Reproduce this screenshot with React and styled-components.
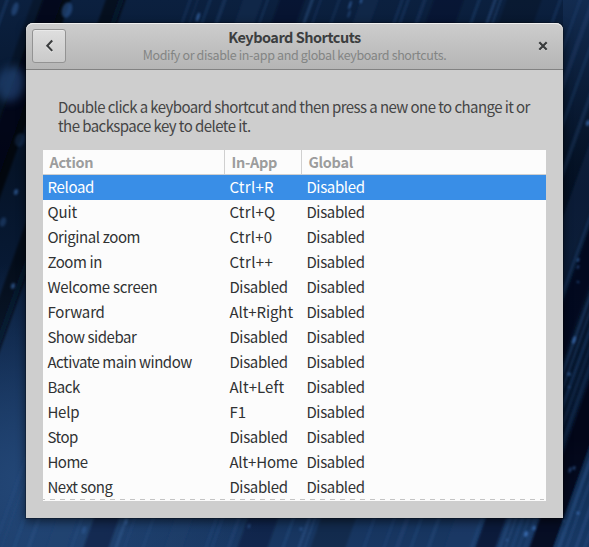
import React from 'react';
import styled, { createGlobalStyle } from 'styled-components';

const GlobalStyle = createGlobalStyle`
  *, *::before, *::after { box-sizing: border-box; }
  body {
    margin: 0;
    overflow: hidden;
    font-family: "Noto Sans CJK SC", "Noto Sans", sans-serif;
    font-size: 15px;
    color: #2e3436;
  }
`;

const Desktop = styled.div`
  display: grid;
  width: 589px;
  height: 547px;
  overflow: hidden;
  background: #0a1c38;
`;

const Wallpaper = styled.svg`
  grid-area: 1 / 1;
  display: block;
`;

const Window = styled.main`
  grid-area: 1 / 1;
  z-index: 1;
  display: flex;
  flex-direction: column;
  width: 537px;
  height: 495px;
  margin: 23px 0 0 26px;
  border-radius: 7px 7px 0 0;
  background: #cecece;
  box-shadow: 0 3px 9px 1px rgba(0, 0, 0, 0.5), 0 0 0 1px rgba(0, 0, 0, 0.23);
`;

const HeaderBar = styled.header`
  display: grid;
  grid-template-columns: 40px 1fr 40px;
  align-items: center;
  height: 47px;
  flex: none;
  border-bottom: 1px solid #828282;
  border-radius: 7px 7px 0 0;
  background: linear-gradient(#cdcdcd, #b5b5b5);
  box-shadow: inset 0 1px #efefef;
`;

const BackButton = styled.button`
  display: grid;
  place-items: center;
  width: 34px;
  height: 34px;
  margin-left: 6px;
  padding: 0;
  border: 1px solid #939393;
  border-radius: 3px;
  background: linear-gradient(#dedede, #cacaca);
  box-shadow: inset 0 1px #e9e9e9;
`;

const CloseButton = styled.button`
  display: grid;
  place-items: center;
  justify-self: center;
  width: 24px;
  height: 24px;
  padding: 0;
  border: 0;
  background: none;
`;

const Titles = styled.div`
  display: flex;
  flex-direction: column;
  align-items: center;
  padding-bottom: 1px;
  white-space: nowrap;
`;

const Title = styled.h1`
  margin: 0;
  font-size: 14.5px;
  font-weight: 700;
  line-height: 18px;
  letter-spacing: -0.5px;
  color: #3c3e3f;
`;

const Subtitle = styled.p`
  margin: 0;
  font-size: 12.5px;
  line-height: 18px;
  letter-spacing: -0.36px;
  color: #838584;
`;

const Intro = styled.p`
  flex: none;
  margin: 27px 0 15px;
  padding-left: 32px;
  height: 38px;
  line-height: 19px;
  color: #454545;
`;

const IntroLine = styled.span`
  display: block;
  white-space: nowrap;
  letter-spacing: ${(p) => p.$tracking}px;
`;

const Table = styled.section`
  flex: none;
  margin: 0 17px;
  width: 503px;
  height: 351px;
  overflow: hidden;
  background:
    repeating-linear-gradient(90deg, #c4c4c4 0 2px, transparent 2px 7px, #c4c4c4 7px 10px) 0 349px / 501px 1px no-repeat,
    #fcfcfc;
`;

const Columns = styled.div`
  display: grid;
  grid-template-columns: 182px 77px 1fr;
`;

const TableHead = styled(Columns)`
  height: 25px;
  border-bottom: 1px solid #cfcfcf;
`;

const HeadCell = styled.div`
  padding-left: 6.5px;
  border-right: 1px solid #d0d0d0;
  font-size: 14.5px;
  font-weight: 700;
  line-height: 23px;
  letter-spacing: -0.32px;
  color: #9c9d9d;
  &:last-child { border-right: 0; }
`;

const TableRow = styled(Columns)`
  height: 25px;
  line-height: 23px;
  color: ${(p) => (p.$selected ? '#ffffff' : '#303233')};
  background: ${(p) => (p.$selected ? '#398ee7' : 'transparent')};
`;

const Cell = styled.div`
  padding-left: 4.4px;
  white-space: nowrap;
  letter-spacing: ${(p) => p.$tracking}px;
`;

const TRACKING = {
  Reload: -0.3, Quit: -0.1, 'Original zoom': -0.4, 'Zoom in': -0.4,
  'Welcome screen': -0.27, Forward: -0.17, 'Show sidebar': -0.47,
  'Activate main window': -0.47, Back: -0.45, Help: -0.2, Stop: -0.45,
  Home: -0.5, 'Next song': -0.4, 'Ctrl+R': 0.3, 'Ctrl+Q': 0.3,
  'Ctrl+0': 0.25, 'Ctrl++': 0.4, Disabled: -0.35, 'Alt+Right': -0.07,
  'Alt+Left': 0.07, 'Alt+Home': -0.15,
};

const SHORTCUTS = [
  ['Reload', 'Ctrl+R'],
  ['Quit', 'Ctrl+Q'],
  ['Original zoom', 'Ctrl+0'],
  ['Zoom in', 'Ctrl++'],
  ['Welcome screen', 'Disabled'],
  ['Forward', 'Alt+Right'],
  ['Show sidebar', 'Disabled'],
  ['Activate main window', 'Disabled'],
  ['Back', 'Alt+Left'],
  ['Help', 'F1'],
  ['Stop', 'Disabled'],
  ['Home', 'Alt+Home'],
  ['Next song', 'Disabled'],
];

// Light streaks: [x at the bottom edge, width, opacity, colour]
const STREAKS = [
  [-195, 3, 0.35, '#2a5088'], [-168, 30, 0.25, '#00040d'],
  [-158, 28, 0.65, '#000309'], [-82, 5, 0.2, '#24497c'], [-95, 20, 0.5, '#000309'],
  [-12, 3, 0.25, '#2a5088'], [-4, 2, 0.2, '#2a5088'], [8, 3, 0.25, '#315a92'],
  [22, 4, 0.25, '#315a92'], [42, 20, 0.2, '#1c3f70'], [66, 2, 0.3, '#315a92'],
  [79, 25, 0.35, '#020b1b'], [110, 3, 0.4, '#3a649c'], [119, 2, 0.3, '#2a5088'],
  [137, 3, 0.2, '#315a92'], [160, 18, 0.2, '#1c3f70'], [200, 3, 0.3, '#2a5088'],
  [206, 3, 0.3, '#2a5088'], [222, 4, 0.25, '#2a5088'], [233, 30, 0.3, '#020b1b'],
  [277, 3, 0.3, '#315a92'], [293, 3, 0.45, '#315a92'], [299, 2, 0.4, '#315a92'],
  [306, 35, 0.2, '#020b1b'], [358, 3, 0.3, '#2a5088'], [378, 3, 0.25, '#2a5088'],
  [390, 5, 0.25, '#2a5088'], [405, 3, 0.25, '#315a92'], [422, 4, 0.25, '#315a92'],
  [440, 24, 0.25, '#1c3f70'], [465, 4, 0.4, '#2a5088'], [471, 20, 0.5, '#020817'],
  [494, 3, 0.4, '#315a92'], [500, 2, 0.4, '#315a92'], [506, 3, 0.4, '#2a5088'],
  [513, 2, 0.3, '#315a92'], [519, 3, 0.3, '#2a5088'], [525, 24, 0.75, '#000612'],
  [549, 90, 0.45, '#1a3a68'], [553, 3, 0.5, '#315a92'], [561, 2, 0.4, '#315a92'],
  [570, 3, 0.3, '#3b68a5'], [579, 2, 0.4, '#315a92'], [588, 6, 0.3, '#315a92'],
  [604, 3, 0.3, '#3b68a5'], [616, 10, 0.2, '#2a5088'], [640, 3, 0.2, '#315a92'],
  [660, 18, 0.25, '#1c3f70'], [690, 4, 0.2, '#2a5088'], [715, 3, 0.2, '#2a5088'],
];

// Out-of-focus highlights: [cx, cy, rx, ry, opacity]
const GLOWS = [
  [11, 84, 14, 18, 0.55], [15, 9, 3, 7, 0.4], [67, 10, 5, 8, 0.6],
  [16, 192, 2, 3, 0.6], [13, 286, 2, 3, 0.6], [20, 140, 5, 7, 0.28],
  [3, 222, 3, 5, 0.3], [198, 17, 1.4, 4.5, 0.75], [350, 5, 1, 4.5, 0.7],
  [349, 14, 0.8, 4, 0.55], [361, 1, 1, 3, 0.8],
  [588, 123, 2, 3, 0.7], [578, 260, 1.3, 2, 0.7], [578, 267, 1, 2, 0.65],
  [578, 282, 1.4, 1, 0.6], [574, 340, 1.4, 4, 0.85], [569, 374, 2, 1.5, 0.7],
  [569, 387, 1.5, 1, 0.5], [570, 470, 1.3, 3, 0.6], [574, 468, 1.4, 2, 0.6],
  [578, 513, 1.5, 1.5, 0.9], [526, 534, 1.8, 3, 0.95], [534, 528, 1.6, 2.5, 0.85],
  [507, 540, 1.3, 1.5, 0.5], [564, 521, 1, 1.5, 0.5], [126, 522, 1.4, 3, 0.65],
  [249, 526, 1.2, 2.5, 0.55], [301, 529, 1.5, 2, 0.45], [84, 530, 2, 4, 0.3],
];

function WallpaperArt() {
  return (
    <Wallpaper width="589" height="547" viewBox="0 0 589 547" aria-hidden="true">
      <defs>
        <linearGradient id="sky" x1="0" y1="0" x2="0" y2="1">
          <stop offset="0" stopColor="#0b203f" />
          <stop offset="0.3" stopColor="#051327" />
          <stop offset="0.65" stopColor="#0a1f3f" />
          <stop offset="1" stopColor="#183762" />
        </linearGradient>
        <radialGradient id="pool" cx="0.05" cy="0.88" r="0.4">
          <stop offset="0" stopColor="#234777" />
          <stop offset="1" stopColor="#234777" stopOpacity="0" />
        </radialGradient>
        <linearGradient id="side" x1="0" y1="0" x2="0" y2="1">
          <stop offset="0" stopColor="#142e54" stopOpacity="0.8" />
          <stop offset="0.35" stopColor="#020c1c" stopOpacity="0.5" />
          <stop offset="0.8" stopColor="#020c1c" stopOpacity="0.6" />
          <stop offset="1" stopColor="#102b52" stopOpacity="0.1" />
        </linearGradient>
        <filter id="soft"><feGaussianBlur stdDeviation="1.2" /></filter>
        <filter id="glow" x="-1" y="-1" width="3" height="3"><feGaussianBlur stdDeviation="0.8" /></filter>
        <filter id="haze" x="-1" y="-1" width="3" height="3"><feGaussianBlur stdDeviation="4" /></filter>
      </defs>
      <rect width="589" height="547" fill="url(#sky)" />
      <rect width="589" height="547" fill="url(#pool)" />
      <rect x="563" width="26" height="547" fill="url(#side)" />
      <g filter="url(#soft)">
        {STREAKS.map(([x, w, o, c], i) => (
          <path key={i} d={`M${x} 560h${w}L${x + w + 205} -12h${-w}Z`} fill={c} opacity={o} />
        ))}
      </g>
      {GLOWS.map(([x, y, rx, ry, o], i) => (
        <ellipse
          key={i} cx={x} cy={y} rx={rx} ry={ry} opacity={o}
          fill={rx > 4 ? '#2a5590' : '#3d70b5'}
          transform={`rotate(18 ${x} ${y})`}
          filter={rx > 10 ? 'url(#haze)' : 'url(#glow)'}
        />
      ))}
    </Wallpaper>
  );
}

export default function App() {
  return (
    <Desktop>
      <GlobalStyle />
      <WallpaperArt />
      <Window>
        <HeaderBar>
          <BackButton aria-label="Back">
            <svg width="16" height="16" viewBox="0 0 16 16" fill="none">
              <path d="M11.2 3.2 6.3 8.2l4.9 4.9" stroke="#e4e4e4" strokeWidth="2" transform="translate(0 1)" />
              <path d="M11.2 2.5 6.3 7.7l4.9 5.2" stroke="#3c3e3f" strokeWidth="2.1" />
            </svg>
          </BackButton>
          <Titles>
            <Title>Keyboard Shortcuts</Title>
            <Subtitle>Modify or disable in-app and global keyboard shortcuts.</Subtitle>
          </Titles>
          <CloseButton aria-label="Close">
            <svg width="12" height="12" viewBox="0 0 12 12" fill="none">
              <path d="m2.3 3.2 7.4 7.4M9.7 3.2l-7.4 7.4" stroke="#dedede" strokeWidth="2.1" />
              <path d="m2.3 2.3 7.4 7.4M9.7 2.3 2.3 9.7" stroke="#393b3c" strokeWidth="2.2" />
            </svg>
          </CloseButton>
        </HeaderBar>
        <Intro>
          <IntroLine $tracking={-0.57}>Double click a keyboard shortcut and then press a new one to change it or</IntroLine>
          <IntroLine $tracking={-0.56}>the backspace key to delete it.</IntroLine>
        </Intro>
        <Table>
          <TableHead>
            <HeadCell>Action</HeadCell>
            <HeadCell>In-App</HeadCell>
            <HeadCell>Global</HeadCell>
          </TableHead>
          {SHORTCUTS.map(([action, inApp], i) => (
            <TableRow key={action} $selected={i === 0}>
              <Cell $tracking={TRACKING[action] ?? 0}>{action}</Cell>
              <Cell $tracking={TRACKING[inApp] ?? 0}>{inApp}</Cell>
              <Cell $tracking={TRACKING.Disabled}>Disabled</Cell>
            </TableRow>
          ))}
        </Table>
      </Window>
    </Desktop>
  );
}
